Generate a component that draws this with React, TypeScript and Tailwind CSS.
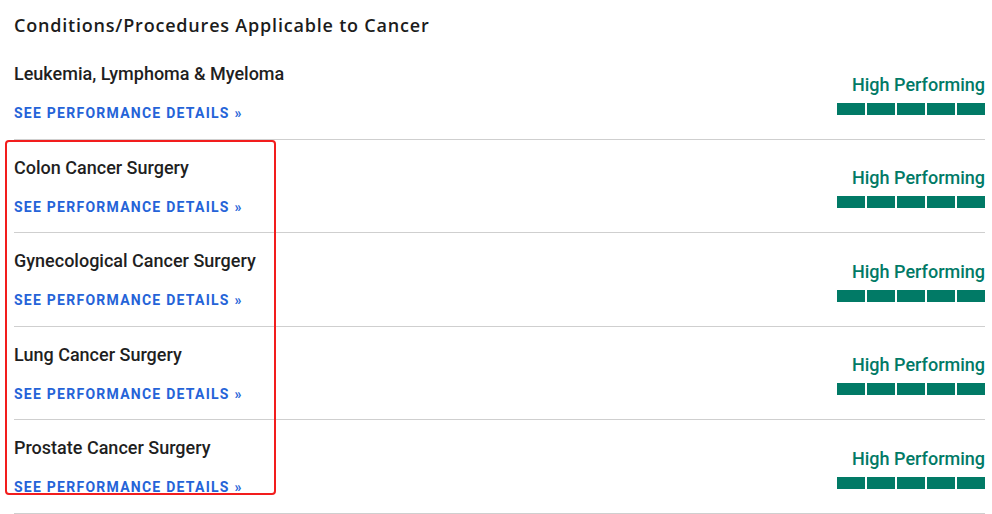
import React from 'react';

const items = [
  'Leukemia, Lymphoma & Myeloma',
  'Colon Cancer Surgery',
  'Gynecological Cancer Surgery',
  'Lung Cancer Surgery',
  'Prostate Cancer Surgery',
];

const RatingBar = () => (
  <div className="flex gap-[2px] mt-[6px]">
    {[0, 1, 2, 3, 4].map((i) => (
      <div key={i} className="w-[28px] h-[12px] bg-[#017a66]" />
    ))}
  </div>
);

const App = () => {
  return (
    <div className="relative w-[992px] h-[514px] bg-white overflow-hidden font-['Roboto',sans-serif]">
      <div className="px-[14px] pr-[7px]">
        <h2 className="pt-[13px] text-[18px] leading-[24px] font-semibold tracking-[0.8px] text-[#1c1c1c] font-['Open_Sans',sans-serif]">
          Conditions/Procedures Applicable to Cancer
        </h2>

        <div className="mt-[9px]">
          {items.map((name) => (
            <div key={name} className="flex justify-between border-b border-[#cfcfcf] h-[93.5px]">
              <div className="pt-[16px]">
                <div className="text-[18px] leading-[24px] font-medium text-[#1f1f1f]">{name}</div>
                <a href="#" className="block mt-[17px] text-[14px] leading-[20px] font-bold tracking-[1.25px] text-[#2563d8]">
                  SEE PERFORMANCE DETAILS »
                </a>
              </div>
              <div className="flex flex-col items-end justify-end pb-[24px]">
                <div className="text-[18px] leading-[24px] font-medium text-[#017a66]">High Performing</div>
                <RatingBar />
              </div>
            </div>
          ))}
        </div>
      </div>

      {/* annotation box */}
      <div className="absolute left-[5px] top-[140px] w-[271px] h-[355px] border-2 border-[#f21d1d] rounded-[4px] pointer-events-none" />
    </div>
  );
};

export default App;
